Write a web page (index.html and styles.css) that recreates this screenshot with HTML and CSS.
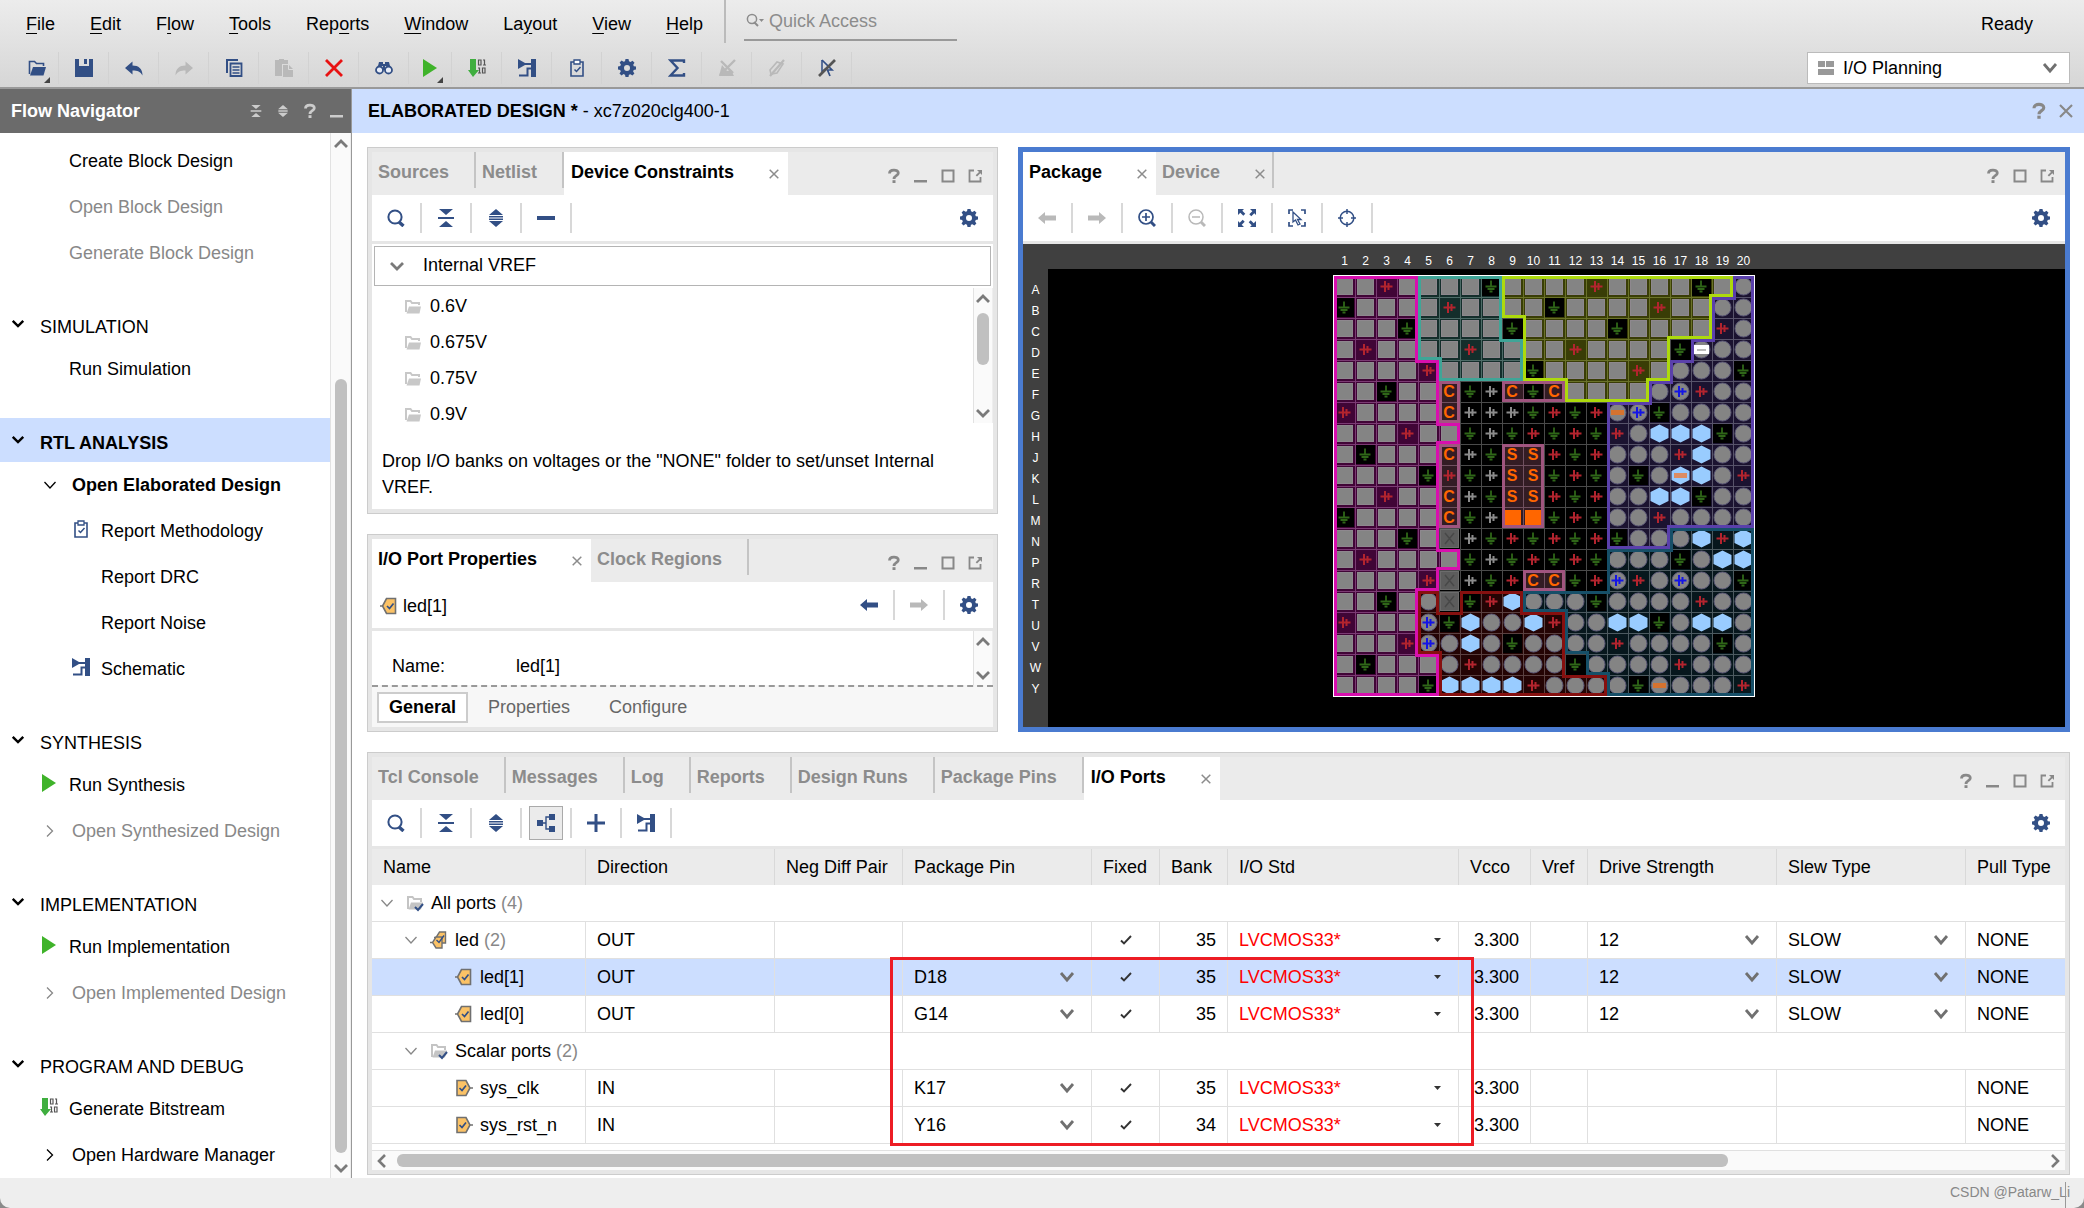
FILE: index.html
```html
<!DOCTYPE html>
<html lang="en">
<head>
<meta charset="utf-8">
<title>Elaborated Design - xc7z020clg400-1</title>
<link rel="stylesheet" href="styles.css">
</head>
<body>
<svg class="sprite" aria-hidden="true">
  <symbol id="i-open" viewBox="0 0 18 18"><path d="M1.500 15V2.500h5l2 2h7V7" fill="none" stroke="currentColor" stroke-width="1.600"/><path d="M5 8h13l-2.500 8.500H2z" fill="currentColor"/></symbol>
  <symbol id="i-save" viewBox="0 0 18 18"><path d="M0 0h4v7h10V0h4v18H0zM9 0h3v5H9z" fill="currentColor"/></symbol>
  <symbol id="i-undo" viewBox="0 0 18 18"><path d="M7.500 2.500v4c6 0 10 3 10 10-2-4-5-5-10-5v4L0 9z" fill="currentColor"/></symbol>
  <symbol id="i-redo" viewBox="0 0 18 18"><path d="M10.500 2.500v4c-6 0-10 3-10 10 2-4 5-5 10-5v4L18 9z" fill="currentColor"/></symbol>
  <symbol id="i-copy" viewBox="0 0 18 18"><path d="M2 14V1h11" fill="none" stroke="currentColor" stroke-width="2"/><path d="M5.500 4.500h11v12.500h-11z" fill="none" stroke="currentColor" stroke-width="1.800"/><path d="M7.500 8h7M7.500 11h7M7.500 14h7" stroke="currentColor" stroke-width="1.600"/></symbol>
  <symbol id="i-paste" viewBox="0 0 18 18"><path d="M0 1h4V0h5v1h4v4H7v12H0z" fill="currentColor"/><path d="M8 6h6l4 4v8H8z" fill="currentColor"/><path d="M13.500 6v4.500H18" fill="none" stroke="#ddd"/></symbol>
  <symbol id="i-delete" viewBox="0 0 18 18"><path d="M1 1l16 16M17 1L1 17" stroke="currentColor" stroke-width="2.800"/></symbol>
  <symbol id="i-find" viewBox="0 0 18 18"><path d="M4 3h4v2h2V3h4l1 4H3zM8 7h2v4H8z" fill="currentColor"/><circle cx="4.500" cy="11" r="3.500" fill="#e8edf7" stroke="currentColor" stroke-width="1.800"/><circle cx="13.500" cy="11" r="3.500" fill="#e8edf7" stroke="currentColor" stroke-width="1.800"/></symbol>
  <symbol id="i-run" viewBox="0 0 18 18"><path d="M2 0l14 9L2 18z" fill="currentColor"/></symbol>
  <symbol id="i-bits" viewBox="0 0 18 18"><path d="M2 0h6v11h3l-6 7-5-7h2z" fill="#3fae3f"/><path d="M10.500 1h2.500v5h-2.500zM15 1h1.500v5M15 6h3M10 9h1.500v5M10 14h3M14.500 9h2.500v5h-2.500z" fill="none" stroke="#555" stroke-width="1.200"/></symbol>
  <symbol id="i-schem" viewBox="0 0 18 18"><path d="M0 0l7 4v2L0 10z" fill="currentColor"/><path d="M13 0h5v18h-5z" fill="currentColor"/><path d="M6 5h8M14 9.500H9.500v7H1" fill="none" stroke="currentColor" stroke-width="2"/></symbol>
  <symbol id="i-clip" viewBox="0 0 18 18"><path d="M3 3h12v14H3z" fill="none" stroke="currentColor" stroke-width="1.600"/><path d="M6 1h6v4H6z" fill="#fff" stroke="currentColor" stroke-width="1.300"/><path d="M6.500 10.500l2 2 4-4.500" fill="none" stroke="currentColor" stroke-width="1.500"/></symbol>
  <symbol id="i-gear" viewBox="0 0 18 18"><path fill-rule="evenodd" fill="currentColor" d="M7.500 0h3l.5 2.300 1.500.7 2-1.300 2 2-1.300 2 .6 1.500L18 7.500v3l-2.300.5-.6 1.500 1.300 2-2 2-2-1.300-1.500.6-.4 2.200h-3l-.5-2.300-1.500-.6-2 1.300-2-2 1.300-2-.6-1.500L0 10.500v-3L2.300 7l.6-1.500-1.300-2 2-2 2 1.300L7 2.300zM9 6a3 3 0 100 6 3 3 0 000-6z"/></symbol>
  <symbol id="i-sigma" viewBox="0 0 18 18"><path d="M16 4V1.500H2.500L9.500 9l-7 7.500H16V14" fill="none" stroke="currentColor" stroke-width="2.400"/></symbol>
  <symbol id="i-nohl" viewBox="0 0 18 18"><path d="M1 17h15l-3-6-4 1-5-6z" fill="currentColor"/><path d="M3 2l12 12M17 1L2 16" stroke="currentColor" stroke-width="2.400"/></symbol>
  <symbol id="i-nomark" viewBox="0 0 18 18"><path d="M2 11l7-8 6 2-6 9-6 1z" fill="none" stroke="currentColor" stroke-width="1.600"/><path d="M16 1L2 17" stroke="currentColor" stroke-width="2.200"/></symbol>
  <symbol id="i-nosel" viewBox="0 0 18 18"><path d="M4 1l10 10H9.500l2.500 6" fill="none" stroke="#324f85" stroke-width="1.700"/><path d="M4 1v12l3-3" fill="none" stroke="#324f85" stroke-width="1.500"/><path d="M17 1L1 17" stroke="#555" stroke-width="2.600"/></symbol>
  <symbol id="i-collapse" viewBox="0 0 18 18"><path d="M2 0h14L9 6zM2 18h14l-7-6zM1 8h16v2H1z" fill="currentColor"/></symbol>
  <symbol id="i-expand" viewBox="0 0 18 18"><path d="M9 0l7 6H2zM9 18l7-6H2zM2 7h14v1.500H2zM2 9.500h14V11H2z" fill="currentColor"/></symbol>
  <symbol id="i-help" viewBox="0 0 18 18"><path d="M4.500 6.500C4.500 2 13.300 2 13.300 6 13.300 8.800 9 8.500 9 12" fill="none" stroke="currentColor" stroke-width="2.800"/><path d="M7.500 13.200h3V16h-3z" fill="currentColor"/></symbol>
  <symbol id="i-min" viewBox="0 0 18 18"><path d="M2 13h13v2.500H2z" fill="currentColor"/></symbol>
  <symbol id="i-max" viewBox="0 0 18 18"><path d="M3.500 3.500h11v11h-11z" fill="none" stroke="currentColor" stroke-width="2"/></symbol>
  <symbol id="i-pop" viewBox="0 0 18 18"><path d="M8 3.500H3.500v11h11V10" fill="none" stroke="currentColor" stroke-width="1.800"/><path d="M11 3h5v5l-1.700-1.700-3.300 3.300-1.300-1.300L13 5z" fill="currentColor"/></symbol>
  <symbol id="i-x" viewBox="0 0 10 10"><path d="M.7.700l8.600 8.600M9.300.700L.7 9.300" stroke="currentColor" stroke-width="1.500"/></symbol>
  <symbol id="i-search" viewBox="0 0 18 18"><circle cx="8" cy="8" r="6.600" fill="none" stroke="currentColor" stroke-width="2"/><path d="M12 13l4.500 4" stroke="currentColor" stroke-width="3.400"/></symbol>
  <symbol id="i-quick" viewBox="0 0 18 14"><circle cx="6" cy="6" r="4.600" fill="none" stroke="currentColor" stroke-width="1.500"/><path d="M8 9l4 4" stroke="currentColor" stroke-width="2"/><path d="M13 6h5l-2.500 3z" fill="currentColor"/></symbol>
  <symbol id="i-minus" viewBox="0 0 18 18"><path d="M0 7h18v4H0z" fill="currentColor"/></symbol>
  <symbol id="i-plus" viewBox="0 0 18 18"><path d="M0 7.500h7.500V0h3v7.500H18v3h-7.500V18h-3v-7.500H0z" fill="currentColor"/></symbol>
  <symbol id="i-tree" viewBox="0 0 18 18"><path d="M0 6h6v6H0zM12 0h6v6h-6zM12 12h6v6h-6z" fill="currentColor"/><path d="M6 9h3M12 3H9v12h3" fill="none" stroke="currentColor" stroke-width="1.400"/></symbol>
  <symbol id="i-left" viewBox="0 0 18 18"><path d="M0 9l7-6v3.500h11v5H7V15z" fill="currentColor"/></symbol>
  <symbol id="i-right" viewBox="0 0 18 18"><path d="M18 9l-7-6v3.500H0v5h11V15z" fill="currentColor"/></symbol>
  <symbol id="i-zin" viewBox="0 0 18 18"><circle cx="8" cy="8" r="7" fill="none" stroke="currentColor" stroke-width="1.700"/><path d="M4 8h8M8 4v8" stroke="currentColor" stroke-width="1.700"/><path d="M13 13l4 4" stroke="currentColor" stroke-width="3"/></symbol>
  <symbol id="i-zout" viewBox="0 0 18 18"><circle cx="8" cy="8" r="7" fill="none" stroke="currentColor" stroke-width="1.500"/><path d="M4 8h8" stroke="currentColor" stroke-width="1.500"/><path d="M13 13l4 4" stroke="currentColor" stroke-width="3"/></symbol>
  <symbol id="i-fit" viewBox="0 0 18 18"><path d="M0 0h6L4.300 1.700l3 3-2 2-3-3L0 6zM18 0v6l-1.700-1.700-3 3-2-2 3-3L12 0zM0 18v-6l1.700 1.700 3-3 2 2-3 3L6 18zM18 18h-6l1.700-1.700-3-3 2-2 3 3L18 12z" fill="currentColor"/></symbol>
  <symbol id="i-selarea" viewBox="0 0 18 18"><path d="M1 5V1h4M13 1h4v4M17 13v4h-4M5 17H1v-4" fill="none" stroke="currentColor" stroke-width="1.700"/><path d="M5 3v10l2.500-2 2.500 5 2-1-2.500-4.500H13z" fill="none" stroke="currentColor" stroke-width="1.300"/></symbol>
  <symbol id="i-target" viewBox="0 0 18 18"><circle cx="9" cy="9" r="6.800" fill="none" stroke="currentColor" stroke-width="1.500"/><path d="M9 0v5M9 13v5M0 9h5M13 9h5" stroke="currentColor" stroke-width="1.500"/></symbol>
  <symbol id="i-down" viewBox="0 0 16 10"><path d="M2 2l6 6 6-6" fill="none" stroke="currentColor" stroke-width="2.800"/></symbol>
  <symbol id="i-up" viewBox="0 0 16 10"><path d="M2 8l6-6 6 6" fill="none" stroke="currentColor" stroke-width="2.800"/></symbol>
  <symbol id="i-thin" viewBox="0 0 12 12"><path d="M.5 3L6 9l5.500-6" fill="none" stroke="currentColor" stroke-width="1.300"/></symbol>
  <symbol id="i-thinr" viewBox="0 0 12 12"><path d="M3 .5L8.500 6 3 11.500" fill="none" stroke="currentColor" stroke-width="1.300"/></symbol>
  <symbol id="i-folder" viewBox="0 0 18 18"><path d="M2 15V4h4.500l1.500 2h7v2" fill="none" stroke="#c8c8c8" stroke-width="2"/><path d="M5 9.500h12l-1.500 7H2.500z" fill="#c8c8c8"/></symbol>
  <symbol id="i-folderc" viewBox="0 0 18 18"><path d="M2 15V3h4.500l1.500 2h7v3" fill="none" stroke="#c4c4c4" stroke-width="2"/><path d="M5 8.500h12l-2 7H2.500z" fill="#c4c4c4"/><path d="M9 13l3 3 5-6" fill="none" stroke="#324f85" stroke-width="2"/></symbol>
  <symbol id="i-out" viewBox="0 0 18 18"><path d="M6.500 1.500h9v15h-9L2.500 9zM0 9h3" fill="#fbc266" stroke="#707070" stroke-width="1.600"/><path d="M7 9l2.500 2.500 4-5" fill="none" stroke="#324f85" stroke-width="1.700"/></symbol>
  <symbol id="i-in" viewBox="0 0 18 18"><path d="M2 1.500h9L15 9l-4 7.500H2zM15 9h3" fill="#fbc266" stroke="#707070" stroke-width="1.600"/><path d="M4.500 9L7 11.500l4-5" fill="none" stroke="#324f85" stroke-width="1.700"/></symbol>
  <symbol id="i-bus" viewBox="0 0 18 18"><path d="M9.500 1h6v11h-6L6 6.500zM4 6.500h3" fill="#fbc266" stroke="#707070" stroke-width="1.400"/><path d="M6 6h6v11H6l-3.500-5.500zM0 11.500h3" fill="#fbc266" stroke="#707070" stroke-width="1.400"/><path d="M6.500 9L9 11.500l5-7" fill="none" stroke="#324f85" stroke-width="1.400"/></symbol>
  <symbol id="i-check" viewBox="0 0 12 12"><path d="M1 6.500l3 3L11 2" fill="none" stroke="#333" stroke-width="1.900"/></symbol>
  <symbol id="i-layout" viewBox="0 0 18 18"><path d="M1 2h7v6H1zM9 2h8v6H9zM1 10h16v6H1z" fill="#999"/></symbol>
</svg>

<div class="window">
<header class="top">
  <div class="menu-row">
    <nav class="menu">
      <a href="#"><u>F</u>ile</a><a href="#"><u>E</u>dit</a><a href="#">F<u>l</u>ow</a><a href="#"><u>T</u>ools</a><a href="#">Rep<u>o</u>rts</a><a href="#"><u>W</u>indow</a><a href="#">La<u>y</u>out</a><a href="#"><u>V</u>iew</a><a href="#"><u>H</u>elp</a>
    </nav>
    <div class="quick"><label><svg class="quick-ico"><use href="#i-quick"/></svg><input type="text" placeholder="Quick Access" aria-label="Quick Access"></label></div>
    <span class="ready">Ready</span>
  </div>
  <div class="main-tools">
    <button class="more" aria-label="Open"><svg class="ico"><use href="#i-open"/></svg></button>
    <button aria-label="Save"><svg class="ico"><use href="#i-save"/></svg></button>
    <button aria-label="Undo"><svg class="ico"><use href="#i-undo"/></svg></button>
    <button class="off" aria-label="Redo"><svg class="ico"><use href="#i-redo"/></svg></button>
    <button aria-label="Copy"><svg class="ico"><use href="#i-copy"/></svg></button>
    <button class="off" aria-label="Paste"><svg class="ico"><use href="#i-paste"/></svg></button>
    <button class="red" aria-label="Delete"><svg class="ico"><use href="#i-delete"/></svg></button>
    <button aria-label="Find"><svg class="ico"><use href="#i-find"/></svg></button>
    <button class="more green" aria-label="Run"><svg class="ico"><use href="#i-run"/></svg></button>
    <button aria-label="Generate Bitstream"><svg class="ico"><use href="#i-bits"/></svg></button>
    <button aria-label="Schematic"><svg class="ico"><use href="#i-schem"/></svg></button>
    <button aria-label="Report Methodology"><svg class="ico"><use href="#i-clip"/></svg></button>
    <button aria-label="Settings"><svg class="ico"><use href="#i-gear"/></svg></button>
    <button aria-label="Sum"><svg class="ico"><use href="#i-sigma"/></svg></button>
    <button class="off" aria-label="Unhighlight"><svg class="ico"><use href="#i-nohl"/></svg></button>
    <button class="off" aria-label="Unmark"><svg class="ico"><use href="#i-nomark"/></svg></button>
    <button aria-label="Unselect"><svg class="ico"><use href="#i-nosel"/></svg></button>
    <div class="layout-pick"><svg class="ico"><use href="#i-layout"/></svg><select class="dd" aria-label="Layout"><option>I/O Planning</option></select></div>
  </div>
</header>

<div class="body">
<aside class="flow">
  <div class="flow-head"><h2>Flow Navigator</h2>
    <button aria-label="Collapse all"><svg class="ico s12"><use href="#i-collapse"/></svg></button><button aria-label="Expand all"><svg class="ico s12"><use href="#i-expand"/></svg></button><button aria-label="Help"><svg class="ico"><use href="#i-help"/></svg></button><button aria-label="Minimize"><svg class="ico"><use href="#i-min"/></svg></button>
  </div>
  <div class="flow-body">
    <nav class="tree">
      <section>
        <a href="#">Create Block Design</a><a href="#" class="dim">Open Block Design</a><a href="#" class="dim">Generate Block Design</a>
      </section>
      <section>
        <h3><svg class="chev"><use href="#i-down"/></svg>SIMULATION</h3>
        <a href="#">Run Simulation</a>
      </section>
      <section>
        <h3 class="sel"><svg class="chev"><use href="#i-down"/></svg>RTL ANALYSIS</h3>
        <a href="#" class="sub bold"><svg class="ico s12"><use href="#i-thin"/></svg>Open Elaborated Design</a>
        <a href="#" class="deep"><svg class="ico"><use href="#i-clip"/></svg>Report Methodology</a>
        <a href="#" class="deep">Report DRC</a>
        <a href="#" class="deep">Report Noise</a>
        <a href="#" class="deep"><svg class="ico"><use href="#i-schem"/></svg>Schematic</a>
      </section>
      <section>
        <h3><svg class="chev"><use href="#i-down"/></svg>SYNTHESIS</h3>
        <a href="#"><svg class="ico run"><use href="#i-run"/></svg>Run Synthesis</a>
        <a href="#" class="sub dim"><svg class="ico s12"><use href="#i-thinr"/></svg>Open Synthesized Design</a>
      </section>
      <section>
        <h3><svg class="chev"><use href="#i-down"/></svg>IMPLEMENTATION</h3>
        <a href="#"><svg class="ico run"><use href="#i-run"/></svg>Run Implementation</a>
        <a href="#" class="sub dim"><svg class="ico s12"><use href="#i-thinr"/></svg>Open Implemented Design</a>
      </section>
      <section>
        <h3><svg class="chev"><use href="#i-down"/></svg>PROGRAM AND DEBUG</h3>
        <a href="#"><svg class="ico"><use href="#i-bits"/></svg>Generate Bitstream</a>
        <a href="#" class="sub"><svg class="ico s12"><use href="#i-thinr"/></svg>Open Hardware Manager</a>
      </section>
    </nav>
    <div class="vscroll"><svg class="arr"><use href="#i-up"/></svg><span class="track"><i class="thumb nav-thumb"></i></span><svg class="arr"><use href="#i-down"/></svg></div>
  </div>
</aside>

<main>
  <div class="title-bar"><h1>ELABORATED DESIGN * <span>- xc7z020clg400-1</span></h1>
    <button aria-label="Help"><svg class="ico s20"><use href="#i-help"/></svg></button><button aria-label="Close"><svg class="ico s14"><use href="#i-x"/></svg></button></div>
  <div class="work">
    <div class="left-col">
      <section class="panel grow">
        <div class="tabs"><button>Sources</button><button>Netlist</button><button class="on">Device Constraints<svg class="ico x"><use href="#i-x"/></svg></button>
          <span class="win"><svg class="ico"><use href="#i-help"/></svg><svg class="ico"><use href="#i-min"/></svg><svg class="ico"><use href="#i-max"/></svg><svg class="ico"><use href="#i-pop"/></svg></span></div>
        <div class="tools">
          <button aria-label="Search"><svg class="ico"><use href="#i-search"/></svg></button><button aria-label="Collapse"><svg class="ico"><use href="#i-collapse"/></svg></button><button aria-label="Expand"><svg class="ico"><use href="#i-expand"/></svg></button><button aria-label="Remove"><svg class="ico"><use href="#i-minus"/></svg></button>
          <button class="end" aria-label="Settings"><svg class="ico"><use href="#i-gear"/></svg></button></div>
        <button class="vref"><svg class="chev"><use href="#i-down"/></svg>Internal VREF</button>
        <div class="volts">
          <ul><li><svg class="ico"><use href="#i-folder"/></svg>0.6V</li><li><svg class="ico"><use href="#i-folder"/></svg>0.675V</li><li><svg class="ico"><use href="#i-folder"/></svg>0.75V</li><li><svg class="ico"><use href="#i-folder"/></svg>0.9V</li></ul>
          <div class="vscroll"><svg class="arr"><use href="#i-up"/></svg><span class="track"><i class="thumb volt-thumb"></i></span><svg class="arr"><use href="#i-down"/></svg></div>
        </div>
        <p class="hint">Drop I/O banks on voltages or the "NONE" folder to set/unset Internal VREF.</p>
      </section>
      <section class="panel">
        <div class="tabs"><button class="on">I/O Port Properties<svg class="ico x"><use href="#i-x"/></svg></button><button>Clock Regions</button>
          <span class="win"><svg class="ico"><use href="#i-help"/></svg><svg class="ico"><use href="#i-min"/></svg><svg class="ico"><use href="#i-max"/></svg><svg class="ico"><use href="#i-pop"/></svg></span></div>
        <div class="tools"><span class="obj"><svg class="ico"><use href="#i-out"/></svg>led[1]</span>
          <button class="end" aria-label="Back"><svg class="ico"><use href="#i-left"/></svg></button><button class="off" aria-label="Forward"><svg class="ico"><use href="#i-right"/></svg></button><button class="last" aria-label="Settings"><svg class="ico"><use href="#i-gear"/></svg></button></div>
        <div class="props"><dl><dt>Name:</dt><dd>led[1]</dd></dl>
          <div class="vscroll"><svg class="arr"><use href="#i-up"/></svg><span class="track"></span><svg class="arr"><use href="#i-down"/></svg></div></div>
        <div class="subtabs"><button class="on">General</button><button>Properties</button><button>Configure</button></div>
      </section>
    </div>

    <section class="panel active">
      <div class="tabs"><button class="on">Package<svg class="ico x"><use href="#i-x"/></svg></button><button class="closable">Device<svg class="ico x"><use href="#i-x"/></svg></button>
        <span class="win"><svg class="ico"><use href="#i-help"/></svg><svg class="ico"><use href="#i-max"/></svg><svg class="ico"><use href="#i-pop"/></svg></span></div>
      <div class="tools">
        <button class="off" aria-label="Back"><svg class="ico"><use href="#i-left"/></svg></button><button class="off" aria-label="Forward"><svg class="ico"><use href="#i-right"/></svg></button><button aria-label="Zoom in"><svg class="ico"><use href="#i-zin"/></svg></button><button class="off" aria-label="Zoom out"><svg class="ico"><use href="#i-zout"/></svg></button><button aria-label="Zoom fit"><svg class="ico"><use href="#i-fit"/></svg></button><button aria-label="Select area"><svg class="ico"><use href="#i-selarea"/></svg></button><button aria-label="Center"><svg class="ico"><use href="#i-target"/></svg></button>
        <button class="end" aria-label="Settings"><svg class="ico"><use href="#i-gear"/></svg></button></div>
      <div class="canvas">
        <div class="cols" id="cols"></div>
        <div class="rows" id="rows"></div>
        <div class="chip"><svg id="chip" width="422" height="422" viewBox="0 0 422 422" role="img" aria-label="Package pins"></svg></div>
      </div>
    </section>

    <section class="panel wide">
      <div class="tabs"><button>Tcl Console</button><button>Messages</button><button>Log</button><button>Reports</button><button>Design Runs</button><button>Package Pins</button><button class="on">I/O Ports<svg class="ico x"><use href="#i-x"/></svg></button>
        <span class="win"><svg class="ico"><use href="#i-help"/></svg><svg class="ico"><use href="#i-min"/></svg><svg class="ico"><use href="#i-max"/></svg><svg class="ico"><use href="#i-pop"/></svg></span></div>
      <div class="tools">
        <button aria-label="Search"><svg class="ico"><use href="#i-search"/></svg></button><button aria-label="Collapse"><svg class="ico"><use href="#i-collapse"/></svg></button><button aria-label="Expand"><svg class="ico"><use href="#i-expand"/></svg></button><button class="pressed" aria-label="Group"><span><svg class="ico"><use href="#i-tree"/></svg></span></button><button aria-label="Add"><svg class="ico"><use href="#i-plus"/></svg></button><button aria-label="Schematic"><svg class="ico"><use href="#i-schem"/></svg></button>
        <button class="end" aria-label="Settings"><svg class="ico"><use href="#i-gear"/></svg></button></div>
      <div class="grid-wrap">
      <table>
        <colgroup><col class="w-name"><col class="w-l"><col class="w-neg"><col class="w-l"><col class="w-s"><col class="w-s"><col class="w-std"><col class="w-vcco"><col class="w-vref"><col class="w-l"><col class="w-l"><col></colgroup>
        <thead><tr><th>Name</th><th>Direction</th><th>Neg Diff Pair</th><th>Package Pin</th><th>Fixed</th><th>Bank</th><th>I/O Std</th><th>Vcco</th><th>Vref</th><th>Drive Strength</th><th>Slew Type</th><th>Pull Type</th></tr></thead>
        <tbody>
          <tr class="group"><td colspan="12"><span class="n l0"><svg class="ico s12"><use href="#i-thin"/></svg><svg class="ico"><use href="#i-folderc"/></svg>All ports <em>(4)</em></span></td></tr>
          <tr><td><span class="n l1"><svg class="ico s12"><use href="#i-thin"/></svg><svg class="ico"><use href="#i-bus"/></svg>led <em>(2)</em></span></td><td>OUT</td><td></td><td></td><td class="mid"><svg class="ico s12"><use href="#i-check"/></svg></td><td class="num">35</td><td><select class="std" aria-label="I/O Std"><option>LVCMOS33*</option></select></td><td class="num">3.300</td><td></td><td><select class="dd" aria-label="Drive Strength"><option>12</option></select></td><td><select class="dd" aria-label="Slew Type"><option>SLOW</option></select></td><td>NONE</td></tr>
          <tr class="hit"><td><span class="n l2"><svg class="ico"><use href="#i-out"/></svg>led[1]</span></td><td>OUT</td><td></td><td><select class="dd" aria-label="Package Pin"><option>D18</option></select></td><td class="mid"><svg class="ico s12"><use href="#i-check"/></svg></td><td class="num">35</td><td><select class="std" aria-label="I/O Std"><option>LVCMOS33*</option></select></td><td class="num">3.300</td><td></td><td><select class="dd" aria-label="Drive Strength"><option>12</option></select></td><td><select class="dd" aria-label="Slew Type"><option>SLOW</option></select></td><td>NONE</td></tr>
          <tr><td><span class="n l2"><svg class="ico"><use href="#i-out"/></svg>led[0]</span></td><td>OUT</td><td></td><td><select class="dd" aria-label="Package Pin"><option>G14</option></select></td><td class="mid"><svg class="ico s12"><use href="#i-check"/></svg></td><td class="num">35</td><td><select class="std" aria-label="I/O Std"><option>LVCMOS33*</option></select></td><td class="num">3.300</td><td></td><td><select class="dd" aria-label="Drive Strength"><option>12</option></select></td><td><select class="dd" aria-label="Slew Type"><option>SLOW</option></select></td><td>NONE</td></tr>
          <tr class="group"><td colspan="12"><span class="n l1"><svg class="ico s12"><use href="#i-thin"/></svg><svg class="ico"><use href="#i-folderc"/></svg>Scalar ports <em>(2)</em></span></td></tr>
          <tr><td><span class="n l2"><svg class="ico"><use href="#i-in"/></svg>sys_clk</span></td><td>IN</td><td></td><td><select class="dd" aria-label="Package Pin"><option>K17</option></select></td><td class="mid"><svg class="ico s12"><use href="#i-check"/></svg></td><td class="num">35</td><td><select class="std" aria-label="I/O Std"><option>LVCMOS33*</option></select></td><td class="num">3.300</td><td></td><td></td><td></td><td>NONE</td></tr>
          <tr><td><span class="n l2"><svg class="ico"><use href="#i-in"/></svg>sys_rst_n</span></td><td>IN</td><td></td><td><select class="dd" aria-label="Package Pin"><option>Y16</option></select></td><td class="mid"><svg class="ico s12"><use href="#i-check"/></svg></td><td class="num">34</td><td><select class="std" aria-label="I/O Std"><option>LVCMOS33*</option></select></td><td class="num">3.300</td><td></td><td></td><td></td><td>NONE</td></tr>
        </tbody>
      </table>
      <div class="mark"></div>
      </div>
      <div class="hscroll"><svg class="arr" viewBox="0 0 10 16"><path d="M8 2L2 8l6 6" fill="none" stroke="currentColor" stroke-width="2.600"/></svg><span class="track"><i class="thumb"></i></span><svg class="arr" viewBox="0 0 10 16"><path d="M2 2l6 6-6 6" fill="none" stroke="currentColor" stroke-width="2.600"/></svg></div>
    </section>
  </div>
</main>
</div>
<footer><span>CSDN @Patarw_Li</span></footer>
</div>
<script src="chip.js"></script>
</body>
</html>
```
FILE: styles.css
```css
* { box-sizing: border-box; }
html { background: #8a8a8a; }
body { margin: 0; font: 18px/22px "Liberation Sans", Arial, sans-serif; color: #000; }
h1, h2, h3, p, ul, dl, dd { margin: 0; padding: 0; font-size: 18px; }
button, select, input { font: inherit; color: inherit; margin: 0; padding: 0; border: 0; border-radius: 0; background: none; }
a { color: inherit; text-decoration: none; }
.sprite { display: none; }
.ico { width: 18px; height: 18px; flex: none; display: block; }
.s12 { width: 12px; height: 12px; }
.s14 { width: 14px; height: 14px; }
.s20 { width: 20px; height: 20px; }
.chev { width: 14px; height: 9px; flex: none; }
.arr { width: 16px; height: 10px; flex: none; color: #7a7a7a; }

.window { min-height: 100vh; display: flex; flex-direction: column; background: #eee; border-radius: 0 0 10px 10px; overflow: hidden; }

/* menu and main toolbar */
.top { background: linear-gradient(#ececec, #d6d6d6); border-bottom: 2px solid #999; }
.menu-row { height: 49px; display: flex; align-items: center; padding: 0 51px 2px 0; }
.menu { display: flex; gap: 35px; padding-left: 26px; }
.menu u { text-underline-offset: 3px; }
.quick { height: 43px; margin-left: 21px; padding-left: 18px; border-left: 2px solid #bbb; align-self: flex-start; color: #8c8c8c; }
.quick label { width: 213px; height: 41px; display: flex; align-items: center; gap: 5px; padding-left: 2px; border-bottom: 2px solid #999; }
.quick-ico { width: 18px; height: 14px; flex: none; }
.quick input { width: 100%; height: 39px; padding-top: 4px; outline: 0; }
.quick input::placeholder { color: #8c8c8c; opacity: 1; }
.ready { margin-left: auto; }
.main-tools { height: 38px; display: flex; align-items: center; padding: 0 14px 0 16px; color: #324f85; }
.main-tools button { position: relative; width: 50px; height: 32px; display: grid; place-items: center; border-right: 1px solid #d2d2d2; color: #324f85; }
.main-tools .off { color: #b9b9b9; }
.main-tools .red { color: #e81212; }
.main-tools .green { color: #3fb32a; }
.main-tools .more { width: 43px; }
.main-tools .more::after { content: ""; position: absolute; right: 8px; bottom: 1px; border: 3px solid; border-color: transparent #444 #444 transparent; }
.layout-pick { margin-left: auto; width: 263px; height: 32px; display: flex; align-items: center; gap: 8px; padding-left: 9px; background: #fff; border: 1px solid #bbb; color: #000; }
.layout-pick select { flex: 1; height: 30px; background-position: right 10px center; }
select { appearance: none; outline: 0; }
.dd { background: url("data:image/svg+xml,%3Csvg xmlns='http://www.w3.org/2000/svg' width='18' height='12'%3E%3Cpath d='M3 2l6 7 6-7' fill='none' stroke='%23707070' stroke-width='2.800'/%3E%3C/svg%3E") no-repeat right 15px center; }
.std { color: #f00; background: url("data:image/svg+xml,%3Csvg xmlns='http://www.w3.org/2000/svg' width='7' height='5'%3E%3Cpath d='M0 0h7L3.500 4z' fill='%23333'/%3E%3C/svg%3E") no-repeat right 17px center; }

.body { flex: 1; display: flex; background: #fff; }

/* flow navigator */
.flow { width: 352px; flex: none; display: flex; flex-direction: column; border-right: 1px solid #999; }
.flow .vscroll { width: 21px; }
.flow-head { height: 44px; display: flex; align-items: center; padding: 0 1px 0 11px; background: #6b6b6b; color: #fff; }
.flow-head h2 { flex: 1; }
.flow-head button { width: 27px; height: 27px; display: grid; place-items: center; color: #ccc; }
.flow-body { flex: 1; display: flex; }
.tree { flex: 1; display: flex; flex-direction: column; gap: 26px; padding-top: 5px; }
.tree h3 { height: 44px; display: flex; align-items: center; gap: 15px; padding: 6px 0 0 11px; font-weight: 400; }
.tree h3 svg { margin-bottom: 8px; }
.tree .sel { background: #ccdeff; font-weight: 700; }
.tree a { height: 46px; display: flex; align-items: center; padding-left: 69px; }
.tree a svg { margin: 0 11px 4px -29px; }
.tree .sub { padding-left: 72px; }
.tree .sub svg { margin: 0 16px 0 -28px; }
.tree .deep { padding-left: 101px; color: #000; }
.tree .deep svg { color: #324f85; }
.tree .run { color: #3fb32a; }
.dim { color: #888; }
.bold { font-weight: 700; }
.vscroll { width: 20px; display: flex; flex-direction: column; align-items: center; padding: 6px 0 5px; background: #fafafa; border-left: 1px solid #e2e2e2; border-right: 1px solid #eee; }
.track { flex: 1; display: block; }
.thumb { display: block; border-radius: 6px; background: #c0c0c0; }
.vscroll .thumb { width: 12px; }
.nav-thumb { margin-top: 230px; height: 774px; }
.volt-thumb { margin-top: 9px; height: 52px; }

/* workspace */
main { flex: 1; min-width: 0; display: flex; flex-direction: column; }
.title-bar { height: 44px; display: flex; align-items: center; gap: 10px; padding: 0 11px 0 16px; background: #ccdeff; }
.title-bar h1 { flex: 1; }
.title-bar span { font-weight: 400; }
.title-bar button { color: #888; }
.work { flex: 1; display: grid; grid-template-columns: 631px minmax(0, 1fr); grid-template-rows: 1fr auto; gap: 20px; padding: 14px 14px 3px 15px; }
.left-col { display: flex; flex-direction: column; gap: 20px; }
.panel { display: flex; flex-direction: column; border: 1px solid #ccc; outline: 4px solid #e6e6e6; outline-offset: -5px; padding: 4px; background: #fff; }
.grow { flex: 1; }
.wide { grid-column: 1 / 3; }
.active { border-color: #4a7bd0; outline-color: #4a7bd0; }
.tabs { height: 43px; display: flex; align-items: flex-start; background: #ebebeb; }
.tabs button { height: 36px; display: flex; align-items: center; padding: 4px 25px 0 6px; border-right: 2px solid #c4c4c4; font-weight: 700; color: #8c8c8c; }
.tabs .on { height: 43px; padding: 4px 9px 7px 7px; border: 0; background: #fff; color: #000; }
.tabs button:first-child { padding-left: 6px; }
.tabs .closable { padding-right: 7px; }
.tabs .x { width: 10px; height: 10px; margin: 4px 0 0 35px; color: #8c8c8c; }
.win { margin-left: auto; height: 48px; display: flex; align-items: center; gap: 9px; padding-right: 9px; color: #888; }
.tools { height: 49px; display: flex; align-items: center; border-bottom: 3px solid #e6e6e6; }
.tools button { width: 50px; height: 30px; display: grid; place-items: center; border-right: 2px solid #d8d8d8; color: #324f85; }
.tools .end { margin-left: auto; }
.tools button:last-child { width: 48px; border: 0; }
.tools button.off { color: #b9b9b9; }
.pressed span { width: 34px; height: 34px; margin: -2px 0; display: grid; place-items: center; background: #ebebeb; border: 1px solid #aaa; }
.obj { display: flex; align-items: center; gap: 5px; padding: 2px 0 0 8px; }

.vref { height: 40px; margin: 2px; display: flex; align-items: center; gap: 18px; padding: 0 0 2px 14px; border: 1px solid #b4b4b4; }
.vref svg { width: 16px; height: 10px; margin-top: 2px; color: #7a7a7a; }
.volts { display: flex; height: 135px; }
.volts ul { flex: 1; list-style: none; }
.volts li { height: 36px; display: flex; align-items: center; gap: 8px; padding-left: 32px; }
.hint { padding: 25px 16px 0 10px; line-height: 26px; }
.props { display: flex; height: 54px; }
.props dl { flex: 1; display: flex; padding: 24px 0 0 20px; }
.props dt { width: 124px; }
.subtabs { height: 42px; display: flex; align-items: center; gap: 1px; padding-left: 5px; background: #f7f7f7; border-top: 2px dashed #999; color: #666; }
.subtabs button { height: 31px; padding: 0 19px; }
.subtabs .on { padding: 0 10px; border: 2px solid #ccc; background: #fff; color: #000; font-weight: 700; }

/* package view */
.canvas { flex: 1; display: grid; grid-template: 25px 1fr / 25px 1fr; background: #404040; color: #fff; font-size: 12px; line-height: 21px; text-align: center; }
.cols { grid-column: 2; display: grid; grid-template-columns: repeat(20, 21px); justify-content: center; padding: 7px 25px 0 0; }
.rows { padding-top: 11px; display: flex; flex-direction: column; }
.chip { background: #000; padding: 6px 25px 0 0; }
#chip { display: block; margin: 0 auto; }
#chip text { font: bold 16px "Liberation Sans", Arial, sans-serif; text-anchor: middle; }

/* ports table */
.grid-wrap { position: relative; padding-bottom: 6px; }
table { width: 100%; table-layout: fixed; border-collapse: separate; border-spacing: 0; }
.w-name { width: 214px; } .w-l { width: 189px; } .w-neg { width: 128px; } .w-s { width: 68px; }
.w-std { width: 231px; } .w-vcco { width: 72px; } .w-vref { width: 57px; }
th { height: 36px; padding: 0 0 0 11px; background: #ebebeb; border-right: 1px solid #d9d9d9; font-weight: 400; text-align: left; white-space: nowrap; }
td { height: 37px; padding: 0 0 0 11px; border-right: 1px solid #e0e0e0; border-bottom: 1px solid #e0e0e0; }
th:last-child, td:last-child { border-right: 0; }
td select { display: block; width: 100%; height: 36px; }
.hit td { background-color: #ccdeff; }
.num { text-align: right; padding: 0 11px 0 0; }
.mid { padding: 0; }
.mid svg { margin: 0 auto; }
.n { display: flex; align-items: center; gap: 7px; }
.n .s12 { margin-right: 6px; color: #888; }
.n em { font-style: normal; color: #888; margin-left: -2px; }
td .l0 { margin-left: -2px; }
.l1 { margin-left: 22px; }
.l2 { margin-left: 72px; }
.mark { position: absolute; left: 518px; top: 108px; width: 584px; height: 189px; border: 3px solid #ed1c24; pointer-events: none; }
.hscroll { height: 20px; display: flex; align-items: center; gap: 10px; padding: 0 5px; background: #fafafa; border-top: 1px solid #e0e0e0; }
.hscroll .arr { width: 10px; height: 16px; }
.hscroll .thumb { width: 81%; height: 13px; }

footer { height: 30px; position: relative; display: flex; justify-content: flex-end; padding-right: 14px; font-size: 14px; line-height: 28px; color: #888; }
footer::after { content: ""; position: absolute; right: 18px; top: 4px; bottom: 0; width: 1px; background: #999; }
```
FILE: chip.js
```js
// Pin kinds: q square pad, c circle pad, h hexagon pad, g ground, r supply,
// v core supply, C/S config pins, B filled config pin, X unused,
// b supply on pad, o/w placed port, H placed port on hexagon pad
const pins = [
  'qqrqqqqgqqqqrqqqqgqc', 'gqqqqrqqqqgqqqqrqqcc', 'qqqgqqqqgqqqqgqqqqrc', 'qrqqqqrqqqqrqqqqgwcc',
  'qqqqrqqqqgqqqqrqcccg', 'qqgqqCgvCgCqqqqcbrcc', 'rqqqqCvvvgrgrobgcccc', 'qqqrqqgvgrgrgrchhhgc',
  'qgqqqCvgSSrgrcccrhcc', 'qqqqgrgvSSgrgcgcHhcr', 'qqrqqCvgSSrgrcchhgcc', 'gqqqqCgvBBgrgccrcccc',
  'qqqgqXvgrgrgrgccchrh', 'qrqqqqgvgrgrgcccgchh', 'qqqqrXvgrCCgrbrcbccg', 'qqgqcXgrhcccgccccrcc',
  'rqqqbghcchrcchhgchhc', 'qqqrbchcgccccrccccgc', 'qgqqqcrccccgccccrccc', 'qqqqghhhhrccccgocccr'
];
const banks = [
  'MMMMTTTTLLLLLLLLLLLP', 'MMMMTTTTLLLLLLLLLLPP', 'MMMMTTTT.LLLLLLLLLPP', 'MMMMTTTTTLLLLLLL.PPP',
  'MMMMMTTTTLLLLLLLPPPP', 'MMMMMN..NNNLLLLPPPPP', 'MMMMMN.......PPPPPPP', 'MMMMMM.......PPPPPPP',
  'MMMMMN..NN...PPPPPPP', 'MMMMMN..NN...PPPPPPP', 'MMMMMN..NN...PPPPPPP', 'MMMMMN..NN...PPPPPPP',
  'MMMMM........PPPDDDD', 'MMMMMM.......DDDDDDD', 'MMMMM....NN..DDDDDDD', 'MMMMK.KKKDDDDDDDDDDD',
  'MMMMKKKKKKKDDDDDDDDD', 'MMMMKKKKKKKDDDDDDDDD', 'MMMMMKKKKKK.DDDDDDDD', 'MMMMMKKKKKKKKDDDDDDD'
];
// fill, grid line, outline
const palette = {
  M: ['#400536', '#7c3a74', '#d80fae'], T: ['#142e2b', '#4d6b67', '#3fa597'], L: ['#393d06', '#6a7228', '#adda0c'],
  P: ['#1b1330', '#57536a', '#5a40ab'], D: ['#07171d', '#4c5a60', '#164f68'], K: ['#240404', '#5a4040', '#86100f'],
  N: ['#331c24', '#70505f', '#a0557f'], '.': ['#000', '#4a4a4a', null]
};
const P = 21;
const rect = (x, y, w, h, f, extra = '') => `<rect x="${x}" y="${y}" width="${w}" height="${h}" fill="${f}" ${extra}/>`;
const supply = (x, y, c) => `<path d="M${x + 4.5} ${y + 10.5}h12M${x + 9} ${y + 5}v11M${x + 12.5} ${y + 7}v7" stroke="${c}" stroke-width="2"/>`;
const disc = (x, y) => `<circle cx="${x + 10.5}" cy="${y + 10.5}" r="8.5" fill="#848484" stroke="#5d5a78"/>`;
const hex = (x, y) => `<path d="M${x + 10.5} ${y + 1.5}l9 4.500v9l-9 4.500-9-4.500v-9z" fill="#99ccff"/>`;
const draw = {
  q: (x, y) => rect(x + 2.5, y + 2.5, 16, 16, '#848484', 'stroke="#8e888e"'),
  c: disc, h: hex,
  g: (x, y) => rect(x + 1, y + 1, 19, 19, '#000') + `<path d="M${x + 10} ${y + 4.5}v7M${x + 4.5} ${y + 10.5}h11M${x + 6.5} ${y + 13}h7M${x + 8.5} ${y + 15.5}h3" stroke="#2f6618" stroke-width="1.800"/>`,
  r: (x, y) => supply(x, y, '#b3242e'), v: (x, y) => supply(x, y, '#8b8b8b'),
  b: (x, y) => disc(x, y) + supply(x, y, '#1414e6'),
  C: (x, y) => `<text x="${x + 10}" y="${y + 16}" fill="#ff6600">C</text>`,
  S: (x, y) => `<text x="${x + 10}" y="${y + 16}" fill="#ff6600">S</text>`,
  B: (x, y) => rect(x + 2, y + 3, 17, 15, '#ff6600'),
  X: (x, y) => rect(x + 1.5, y + 1.5, 18, 18, '#5c5c5c', 'stroke="#6c6c6c"') + `<path d="M${x + 6} ${y + 5}l9 11m0-11l-9 11" stroke="#484848" stroke-width="1.500"/>`,
  o: (x, y) => disc(x, y) + rect(x + 4, y + 8, 13, 5, '#d5732f'),
  H: (x, y) => hex(x, y) + rect(x + 4, y + 8, 13, 5, '#dc8c62'),
  w: (x, y) => disc(x, y) + rect(x + 3, y + 6, 15, 9, '#fff') + rect(x + 6, y + 10, 9, 2, '#bbb')
};
const at = (r, c) => (banks[r] || '')[c];
let cells = '', edges = '';
for (let r = 0; r < 20; r++) {
  for (let c = 0; c < 20; c++) {
    const x = 1 + c * P, y = 1 + r * P, b = at(r, c), [fill, line, edge] = palette[b];
    cells += rect(x, y, P, P, line) + rect(x + 1, y + 1, 20, 20, fill) + draw[pins[r][c]](x, y);
    if (!edge) continue;
    const up = at(r - 1, c) === b, dn = at(r + 1, c) === b, lf = at(r, c - 1) === b, rt = at(r, c + 1) === b;
    if (!up) edges += rect(x, y, P, 3, edge);
    if (!dn) edges += rect(x, y + 18, P, 3, edge);
    if (!lf) edges += rect(x, y, 3, P, edge);
    if (!rt) edges += rect(x + 18, y, 3, P, edge);
    // inner corners
    if (up && lf && at(r - 1, c - 1) !== b) edges += rect(x, y, 3, 3, edge);
    if (up && rt && at(r - 1, c + 1) !== b) edges += rect(x + 18, y, 3, 3, edge);
    if (dn && lf && at(r + 1, c - 1) !== b) edges += rect(x, y + 18, 3, 3, edge);
    if (dn && rt && at(r + 1, c + 1) !== b) edges += rect(x + 18, y + 18, 3, 3, edge);
  }
}
document.getElementById('chip').innerHTML = rect(0, 0, 422, 422, '#fff') + cells + edges;
document.getElementById('cols').innerHTML = pins.map((_, i) => `<span>${i + 1}</span>`).join('');
document.getElementById('rows').innerHTML = [...'ABCDEFGHJKLMNPRTUVWY'].map(l => `<span>${l}</span>`).join('');
```
